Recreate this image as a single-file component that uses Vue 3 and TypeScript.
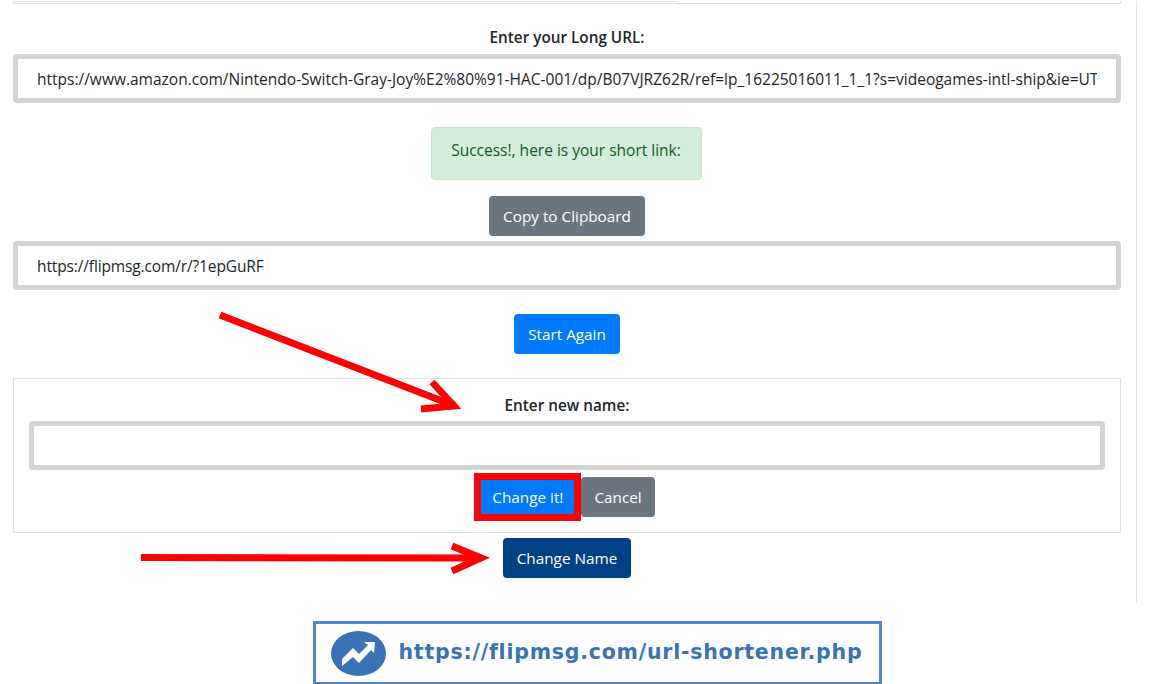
<script setup lang="ts">
const longUrl = 'https://www.amazon.com/Nintendo-Switch-Gray-Joy%E2%80%91-HAC-001/dp/B07VJRZ62R/ref=lp_16225016011_1_1?s=videogames-intl-ship&ie=UTF8&qid=1571234567&sr=1-1'
const shortUrl = 'https://flipmsg.com/r/?1epGuRF'
</script>

<template>
  <div class="page">
    <main class="panel">
      <div class="top-card"><div class="top-tab"></div></div>

      <label class="label first-label">Enter your Long URL:</label>
      <input class="field" type="text" :value="longUrl" readonly />

      <div class="center alert-row"><div class="alert">Success!, here is your short link:</div></div>
      <div class="center copy-row"><button class="btn gray">Copy to Clipboard</button></div>
      <input class="field short-field" type="text" :value="shortUrl" readonly />

      <div class="center again-row"><button class="btn blue">Start Again</button></div>

      <section class="card">
        <label class="label">Enter new name:</label>
        <input class="field name-field" type="text" />
        <div class="center card-actions">
          <button class="btn blue highlighted">Change it!</button>
          <button class="btn gray cancel">Cancel</button>
        </div>
      </section>

      <div class="center name-row"><button class="btn navy">Change Name</button></div>
    </main>

    <footer class="banner-row">
      <div class="banner">
        <svg class="logo" viewBox="0 0 55 45" width="55" height="45" aria-hidden="true">
          <ellipse cx="27.500" cy="22.500" rx="27.500" ry="22.500" fill="#3a72b5" />
          <path d="M11 35 L11 28 L22 17 L28 23 L37 14 L33 11 L44 11 L43 22 L40 19 L28 32 L22 26 Z" fill="#fff" />
        </svg>
        <span class="banner-text">https://flipmsg.com/url-shortener.php</span>
      </div>
    </footer>

    <svg class="arrows" width="1155" height="684" viewBox="0 0 1155 684" aria-hidden="true">
      <g fill="none" stroke="#ff0000" stroke-width="7">
        <path d="M220 315 L455 406" />
        <path d="M432 382 L454 406 L421 409" />
        <path d="M141 557.500 L480 558" />
        <path d="M452 546 L481 558 L452 571" />
      </g>
    </svg>
  </div>
</template>

<style>
html, body { margin: 0; background: #fff; }
</style>

<style scoped>
.page {
  position: relative;
  width: 1155px;
  height: 684px;
  overflow: hidden;
  font-family: "Open Sans", "Noto Sans", sans-serif;
  font-size: 15.300px;
  color: #212529;
  background: #fff;
}
.panel {
  box-sizing: border-box;
  width: 1137px;
  height: 601px;
  padding: 0 15px 0 13px;
  border-right: 1px solid #dee2e6;
}
.top-card {
  box-sizing: border-box;
  height: 3px;
  border: 1px solid #dee2e6;
  border-top: 0;
}
.top-tab {
  width: 663px;
  height: 1px;
  margin-top: 1px;
  background: #dee2e6;
}
.label {
  display: block;
  height: 24px;
  line-height: 24px;
  text-align: center;
  font-weight: 550;
}
.first-label { margin-top: 21px; margin-bottom: 5px; }
.field {
  display: block;
  box-sizing: border-box;
  width: 100%;
  height: 49px;
  padding: 0 19px;
  border: 5px solid #d3d3d3;
  border-radius: 4px;
  outline: none;
  background: #fff;
  color: #212529;
  font: inherit;
  font-size: 15.500px;
}
.center { display: flex; justify-content: center; }
.alert-row { margin-top: 24px; padding-right: 2px; }
.alert {
  box-sizing: border-box;
  width: 271px;
  height: 53px;
  line-height: 45px;
  text-align: center;
  white-space: nowrap;
  font-size: 15.500px;
  color: #155724;
  background: #d4edda;
  border: 1px solid #c3e6cb;
  border-radius: 4px;
}
.copy-row { margin-top: 16px; }
.short-field { margin-top: 5px; letter-spacing: -0.130px; }
.again-row { margin-top: 24px; }
.btn {
  box-sizing: border-box;
  height: 40px;
  padding: 0 13px;
  border: 1px solid transparent;
  border-radius: 4px;
  color: #fff;
  font: inherit;
  white-space: nowrap;
}
.gray { background: #6c757d; }
.blue { background: #007bff; }
.navy { background: #004085; }
.card {
  box-sizing: border-box;
  height: 155px;
  margin-top: 24px;
  padding: 14px 15px 0;
  border: 1px solid #dee2e6;
}
.name-field { margin-top: 4px; }
.card-actions { margin-top: 7px; align-items: center; padding-right: 5px; }
.highlighted {
  height: 34px;
  border-radius: 0;
  box-shadow: 0 0 0 7px #ff0000;
  margin: 0 7px;
  padding: 0 10px;
}
.cancel { padding: 0 12px; }
.name-row { margin-top: 5px; }
.banner-row {
  display: flex;
  justify-content: center;
  padding: 19px 0 0 39px;
}
.banner {
  box-sizing: border-box;
  display: flex;
  align-items: center;
  gap: 13px;
  width: 569px;
  height: 64px;
  padding-left: 15px;
  border: 3px solid #4f86d0;
}
.logo { flex: none; }
.banner-text {
  font-family: "DejaVu Sans", sans-serif;
  font-weight: 700;
  font-size: 20.500px;
  letter-spacing: 0.770px;
  padding-bottom: 2px;
  color: #3a72b5;
  white-space: nowrap;
}
.arrows {
  position: absolute;
  inset: 0;
  pointer-events: none;
}
</style>
